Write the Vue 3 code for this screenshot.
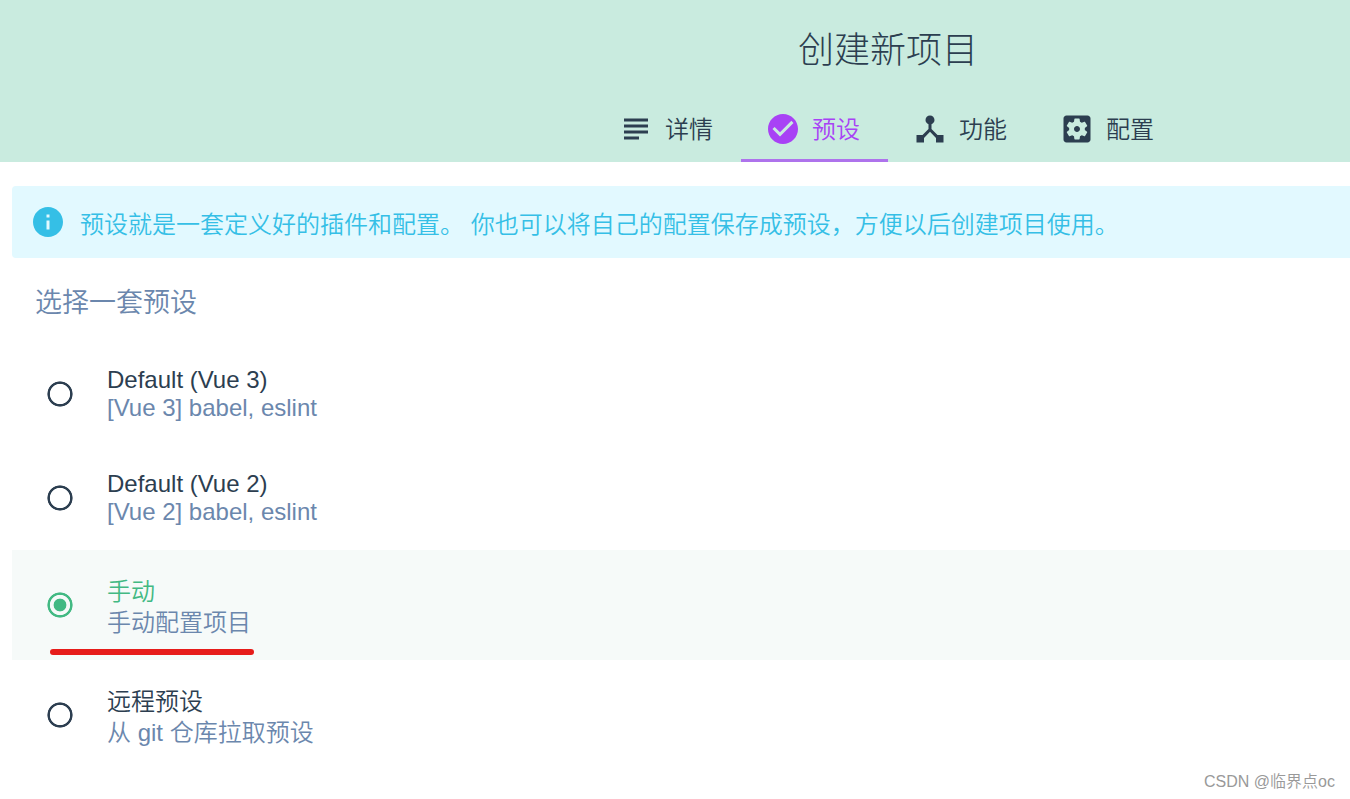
<script setup>
import { ref } from 'vue'

const tabs = [
  { id: 'details', label: '详情', icon: 'M14 17H4v2h10v-2zm6-8H4v2h16V9zM4 15h16v-2H4v2zM4 5v2h16V5H4z' },
  { id: 'presets', label: '预设', icon: 'M12 2C6.48 2 2 6.48 2 12s4.48 10 10 10 10-4.48 10-10S17.52 2 12 2zm-2 15l-5-5 1.41-1.41L10 14.17l7.59-7.59L19 8l-9 9z' },
  { id: 'features', label: '功能', icon: 'M17 16l-4-4V8.82C14.16 8.4 15 7.3 15 6c0-1.66-1.34-3-3-3S9 4.34 9 6c0 1.3.84 2.4 2 2.82V12l-4 4H3v5h5v-3.05l4-4.2 4 4.2V21h5v-5h-4z' },
  { id: 'config', label: '配置', icon: 'M12 10c-1.1 0-2 .9-2 2s.9 2 2 2 2-.9 2-2-.9-2-2-2zm7-7H5c-1.11 0-2 .9-2 2v14c0 1.1.89 2 2 2h14c1.11 0 2-.9 2-2V5c0-1.1-.89-2-2-2zm-1.75 9c0 .23-.02.46-.05.68l1.48 1.16c.13.11.17.3.08.45l-1.4 2.42c-.09.15-.27.21-.43.15l-1.74-.7c-.36.28-.76.51-1.18.69l-.26 1.85c-.03.17-.18.3-.35.3h-2.8c-.17 0-.32-.13-.35-.29l-.26-1.85c-.43-.18-.82-.41-1.18-.69l-1.74.7c-.16.06-.34 0-.43-.15l-1.4-2.42c-.09-.15-.05-.34.08-.45l1.48-1.16c-.03-.23-.05-.46-.05-.69 0-.23.02-.46.05-.68l-1.48-1.16c-.13-.11-.17-.3-.08-.45l1.4-2.42c.09-.15.27-.21.43-.15l1.74.7c.36-.28.76-.51 1.18-.69l.26-1.85c.03-.17.18-.3.35-.3h2.8c.17 0 .32.13.35.29l.26 1.85c.43.18.82.41 1.18.69l1.74-.7c.16-.06.34 0 .43.15l1.4 2.42c.09.15.05.34-.08.45l-1.48 1.16c.03.23.05.46.05.69z' },
]
const activeTab = ref('presets')

const presets = [
  { id: 'vue3', name: 'Default (Vue 3)', info: '[Vue 3] babel, eslint' },
  { id: 'vue2', name: 'Default (Vue 2)', info: '[Vue 2] babel, eslint' },
  { id: 'manual', name: '手动', info: '手动配置项目', tall: true, marked: true },
  { id: 'remote', name: '远程预设', info: '从 git 仓库拉取预设', tall: true },
]
const selected = ref('manual')
</script>

<template>
  <div class="page">
    <header class="header">
      <h1 class="title">创建新项目</h1>
      <nav class="tabs" role="tablist">
        <button
          v-for="tab in tabs"
          :key="tab.id"
          type="button"
          role="tab"
          class="tab"
          :class="{ active: activeTab === tab.id }"
          :aria-selected="activeTab === tab.id"
          @click="activeTab = tab.id"
        >
          <svg class="icon" viewBox="0 0 24 24" aria-hidden="true"><path :d="tab.icon" /></svg>
          <span class="tab-label">{{ tab.label }}</span>
        </button>
      </nav>
    </header>

    <main class="content">
      <div class="notice">
        <svg class="icon" viewBox="0 0 24 24" aria-hidden="true">
          <path d="M12 2C6.48 2 2 6.48 2 12s4.48 10 10 10 10-4.48 10-10S17.52 2 12 2zm1 15h-2v-6h2v6zm0-8h-2V7h2v2z" />
        </svg>
        <span>预设就是一套定义好的插件和配置。 你也可以将自己的配置保存成预设，方便以后创建项目使用。</span>
      </div>

      <h2 id="preset-heading" class="subtitle">选择一套预设</h2>

      <div role="radiogroup" aria-labelledby="preset-heading">
        <label
          v-for="preset in presets"
          :key="preset.id"
          class="preset"
          :class="{ selected: selected === preset.id, tall: preset.tall }"
          :for="preset.id"
        >
          <input :id="preset.id" v-model="selected" class="radio" type="radio" name="preset" :value="preset.id" />
          <span class="text">
            <span class="name">{{ preset.name }}</span>
            <span class="info">{{ preset.info }}</span>
          </span>
          <span v-if="preset.marked" class="marker"></span>
        </label>
      </div>
    </main>

    <footer class="watermark">CSDN @临界点oc</footer>
  </div>
</template>

<style>
body {
  margin: 0;
  background: #fff;
}
</style>

<style scoped>
.page {
  min-height: 100vh;
  overflow: hidden;
  position: relative;
  font-family: "Liberation Sans", "Noto Sans CJK SC", sans-serif;
  font-size: 24px;
  font-weight: 350;
  color: #2c3e50;
}

.header {
  display: flex;
  flex-direction: column;
  align-items: center;
  padding-left: 426px;
  background: #c9ebdf;
}

.title {
  margin: 0;
  padding: 25px 0 19px;
  font-size: 36px;
  line-height: 52px;
  font-weight: 300;
}

.tabs {
  display: flex;
}

.tab {
  display: flex;
  align-items: center;
  gap: 11px;
  box-sizing: border-box;
  width: 147px;
  height: 66px;
  padding: 3px 0 3px 24px;
  border: 0;
  background: none;
  font: inherit;
  color: inherit;
  cursor: pointer;
}

.tab-label {
  padding-bottom: 4px;
}

.tab.active {
  color: #a842f5;
  box-shadow: inset 0 -3px #ae73ec;
}

.icon {
  flex: none;
  width: 36px;
  height: 36px;
  fill: currentColor;
}

.content {
  padding: 24px 0 0 12px;
}

.notice {
  display: flex;
  align-items: center;
  gap: 14px;
  height: 72px;
  padding-left: 18px;
  border-radius: 4px 0 0 4px;
  background: #e2f9ff;
  color: #35bfe6;
  white-space: nowrap;
}

.subtitle {
  margin: 0;
  padding: 25px 23px 19px;
  font-size: 27px;
  line-height: 40px;
  font-weight: 350;
  color: #6b87ad;
}

.preset {
  display: flex;
  align-items: center;
  gap: 34px;
  position: relative;
  padding: 24px 35px;
  line-height: 28px;
  cursor: pointer;
}

.preset.tall {
  line-height: 31px;
}

.preset.tall .text {
  padding-top: 2px;
  margin-bottom: -2px;
}

.preset.selected {
  background: #f6faf9;
}

.radio {
  appearance: none;
  flex: none;
  width: 26px;
  height: 26px;
  margin: 0;
  border-radius: 50%;
  color: #2c3e50;
  background: radial-gradient(closest-side, transparent 75%, currentColor 81%, currentColor 94%, transparent 100%);
}

.radio:checked {
  color: #42b983;
  background: radial-gradient(
    closest-side,
    currentColor 46%,
    transparent 52%,
    transparent 75%,
    currentColor 81%,
    currentColor 94%,
    transparent 100%
  );
}

.text {
  display: flex;
  flex-direction: column;
}

.selected .name {
  color: #42b983;
}

.info {
  color: #6b87ad;
}

.marker {
  position: absolute;
  left: 38px;
  bottom: 5px;
  width: 204px;
  height: 6px;
  border-radius: 3px;
  background: #e61c1a;
}

.watermark {
  position: absolute;
  right: 15px;
  bottom: 5px;
  font-size: 16px;
  line-height: 24px;
  color: #999;
}
</style>
